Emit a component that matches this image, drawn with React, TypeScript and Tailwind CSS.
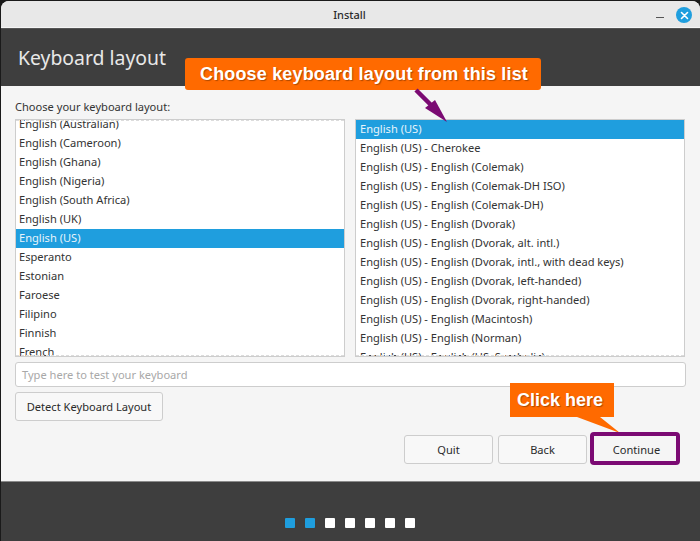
const left = ["English (Australian)","English (Cameroon)","English (Ghana)","English (Nigeria)","English (South Africa)","English (UK)","English (US)","Esperanto","Estonian","Faroese","Filipino","Finnish","French"];
const right = ["English (US)","English (US) - Cherokee","English (US) - English (Colemak)","English (US) - English (Colemak-DH ISO)","English (US) - English (Colemak-DH)","English (US) - English (Dvorak)","English (US) - English (Dvorak, alt. intl.)","English (US) - English (Dvorak, intl., with dead keys)","English (US) - English (Dvorak, left-handed)","English (US) - English (Dvorak, right-handed)","English (US) - English (Macintosh)","English (US) - English (Norman)","English (US) - English (US, Symbolic)"];

function Row({ t, sel, right: isRight }: { t: string; sel: boolean; right?: boolean }) {
  return <div className={`h-[19px] shrink-0 leading-[18px] whitespace-nowrap ${isRight ? "pl-[4px]" : "pl-[3px]"} ${sel ? "bg-[#1f9ede] text-[#e8f4fb]" : "text-[#333]"}`}>{t}</div>;
}

function Btn({ children, w, extra = "" }: { children: string; w: string; extra?: string }) {
  return <div className={`h-[29px] ${w} flex items-center justify-center rounded-[3px] border border-[#cdcdcd] bg-[#f8f8f8] text-[#2a2a2a] pt-[1px] ${extra}`}>{children}</div>;
}

export default function App() {
  return (
    <div className="relative w-[700px] h-[541px] overflow-hidden bg-[#1a1a1a] text-[11.1px] font-['Noto_Sans',sans-serif] pl-[1px] pt-[1px]">
      <div className="flex flex-col w-[699px] h-[540px] rounded-t-[8px] overflow-hidden bg-[#f5f5f5]">
        <div className="relative h-[27px] shrink-0 flex items-center justify-center bg-[#e8e8e8] border-b border-[#f5f5f5] text-[#2a2a2a] font-medium text-[11px] pt-[3px] pr-[2px]">
          Install
          <div className="absolute left-[655px] top-[16px] w-[8px] h-[1px] bg-[#555]" />
          <div className="absolute left-[675px] top-[6px] w-[16px] h-[16px] rounded-full bg-[#1f9ede] flex items-center justify-center">
            <svg width="9" height="9" viewBox="0 0 9 9"><path d="M1.5 1.5l6 6M7.5 1.5l-6 6" stroke="#fff" strokeWidth="1.6" strokeLinecap="round" /></svg>
          </div>
        </div>
        <div className="h-[58px] shrink-0 bg-[#3e3e3e] border-t border-[#555] pl-[17px] pt-[15px] text-[19.4px] leading-[28px] text-[#e8e8e8]">Keyboard layout</div>
        <div className="flex-1 flex flex-col pl-[14px] pr-[14px] pt-[12px]">
          <div className="h-[21px] leading-[18px] text-[#333]">Choose your keyboard layout:</div>
          <div className="flex gap-[10px] h-[238px]">
            <div className="relative w-[330px] border border-[#cdcdcd] bg-white overflow-hidden flex flex-col">
              <div className="-mt-[5px]">{left.map(t => <Row key={t} t={t} sel={t === "English (US)"} />)}</div>
              <div className="absolute top-0 inset-x-0 border-t border-dashed border-[#dcdcdc]" />
              <div className="absolute bottom-0 inset-x-0 border-t border-dashed border-[#dcdcdc]" />
            </div>
            <div className="relative w-[330px] border border-[#cdcdcd] bg-white overflow-hidden flex flex-col">
              {right.map((t, i) => <Row key={t} t={t} sel={i === 0} right />)}
              <div className="absolute bottom-0 inset-x-0 border-t border-dashed border-[#dcdcdc]" />
            </div>
          </div>
          <div className="mt-[5px] h-[25px] rounded-[3px] border border-[#cdcdcd] bg-white pl-[6px] leading-[23px] text-[#a8a8a8]">Type here to test your keyboard</div>
          <Btn w="w-[148px]" extra="mt-[5px]">Detect Keyboard Layout</Btn>
          <div className="flex justify-end gap-[5px] mt-[14px] pr-[5px]">
            <Btn w="w-[89px]">Quit</Btn>
            <Btn w="w-[89px]">Back</Btn>
            <Btn w="w-[89px]" extra="border-0 bg-transparent">Continue</Btn>
          </div>
        </div>
        <div className="h-[60px] shrink-0 bg-[#3e3e3e] border-t border-[#8a8a8a] flex justify-center gap-[10px] pt-[36px] pr-[1px]">
          {[0, 1, 2, 3, 4, 5, 6].map(i => <div key={i} className={`w-[10px] h-[10px] rounded-[1px] ${i < 2 ? "bg-[#1f9ede]" : "bg-white"}`} />)}
        </div>
      </div>

      <div className="absolute left-[185px] top-[58px] w-[356px] h-[32px] rounded-[3px] bg-[#ff6a00] flex items-center justify-center pl-[2px] text-white font-bold text-[18px] tracking-[0.16px] [text-shadow:1px_1px_1px_rgba(120,50,0,0.6)] font-['Liberation_Sans',sans-serif]">Choose keyboard layout from this list</div>
      <svg className="absolute left-[412px] top-[86px]" width="40" height="38" viewBox="0 0 40 38">
        <path d="M4 4 L19 19" stroke="#7b0a73" strokeWidth="4.5" />
        <path d="M35 36 L13 22 L23 14 Z" fill="#7b0a73" />
      </svg>
      <div className="absolute left-[510px] top-[383px] w-[104px] h-[34px] bg-[#ff6a00] flex items-center pl-[7px] text-white font-bold text-[18px] [text-shadow:1px_1px_1px_rgba(120,50,0,0.6)] font-['Liberation_Sans',sans-serif]">Click here</div>
      <svg className="absolute left-[570px] top-[415px]" width="52" height="20" viewBox="0 0 52 20"><path d="M7 2 L50 18 L30 2 Z" fill="#ff6a00" /></svg>
      <div className="absolute left-[590px] top-[432px] w-[90px] h-[33px] rounded-[4px] border-[4px] border-[#7b0a73]" />
    </div>
  );
}
